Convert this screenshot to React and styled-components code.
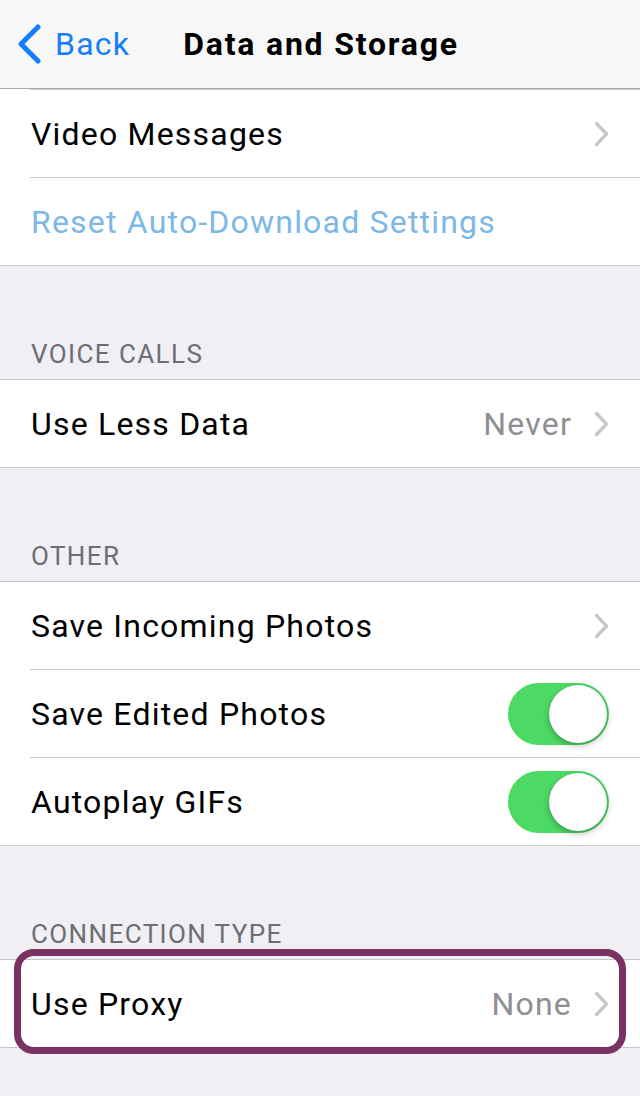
import React from 'react';
import styled, { createGlobalStyle } from 'styled-components';

const GlobalStyle = createGlobalStyle`
  html, body {
    margin: 0;
    padding: 0;
    background: #efeff4;
  }
  body {
    font-family: Roboto, 'Liberation Sans', Arial, sans-serif;
    -webkit-font-smoothing: antialiased;
  }
`;

const Screen = styled.div`
  width: 640px;
  height: 1096px;
  overflow: hidden;
  background: #efeff4;
  display: flex;
  flex-direction: column;
`;

const NavBar = styled.header`
  position: relative;
  flex-shrink: 0;
  height: 88px;
  background: #f7f7f7;
  border-bottom: 1px solid #a9a9ad;
  display: flex;
  align-items: center;
  justify-content: center;
`;

const BackButton = styled.button`
  position: absolute;
  left: 16px;
  top: 0;
  bottom: 0;
  display: flex;
  align-items: center;
  gap: 11px;
  padding: 0;
  border: none;
  background: transparent;
  color: #167efb;
  font-family: inherit;
  font-size: 32px;
  letter-spacing: 1.2px;
  cursor: pointer;
  svg {
    width: 28px;
    height: 40px;
  }
`;

const Title = styled.h1`
  margin: 0 0 0 2px;
  font-size: 32px;
  font-weight: 700;
  color: #000;
  letter-spacing: 1.8px;
`;

const Group = styled.section`
  background: #fff;
  border-bottom: 1px solid #c8c7cc;
  border-top: ${(p) => (p.$scrolled ? 'none' : '1px solid #c8c7cc')};
  ${(p) => p.$scrolled && `
    padding-top: 1px;
    position: relative;
    &::before {
      content: '';
      position: absolute;
      top: 0;
      left: 30px;
      right: 0;
      height: 1px;
      background: #c8c7cc;
    }
  `}
`;

const SectionHeader = styled.div`
  height: 113px;
  box-sizing: border-box;
  display: flex;
  align-items: flex-end;
  padding: 0 31px 10px;
  font-size: 26px;
  line-height: 30px;
  color: #6d6d72;
  text-transform: uppercase;
  letter-spacing: 1.4px;
`;

const Row = styled.div`
  position: relative;
  height: 87px;
  margin-left: 30px;
  padding-right: 31px;
  display: flex;
  align-items: center;
  gap: 22px;
  border-bottom: ${(p) => (p.$last ? 'none' : '1px solid #c8c7cc')};
`;

const Label = styled.span`
  flex: 1;
  font-size: 32px;
  letter-spacing: 1.2px;
  color: ${(p) => (p.$link ? '#7cb8e8' : '#000')};
  padding-left: 1px;
  white-space: nowrap;
`;

const Value = styled.span`
  font-size: 32px;
  letter-spacing: 1.2px;
  color: #8e8e93;
`;

const Chevron = styled.svg`
  width: 15px;
  height: 26px;
  flex-shrink: 0;
`;

const Toggle = styled.span`
  position: relative;
  width: 101px;
  height: 62px;
  border-radius: 31px;
  background: ${(p) => (p.$on ? '#4cd964' : '#e5e5ea')};
  flex-shrink: 0;
  &::after {
    content: '';
    position: absolute;
    top: 2px;
    right: ${(p) => (p.$on ? '2px' : 'auto')};
    left: ${(p) => (p.$on ? 'auto' : '2px')};
    width: 58px;
    height: 58px;
    border-radius: 50%;
    background: #fff;
    box-shadow: 0 3px 6px rgba(0, 0, 0, 0.25), 0 0 1px rgba(0, 0, 0, 0.3);
  }
`;

const Highlight = styled.div`
  position: absolute;
  left: -16px;
  right: 14px;
  top: -11px;
  bottom: -7px;
  border: 7px solid #7b3262;
  border-radius: 20px;
  pointer-events: none;
`;

const ArrowRight = () => (
  <Chevron viewBox="0 0 15 26">
    <path d="M2.5 2.5 L12.5 13 L2.5 23.5" fill="none" stroke="#c7c7cc" strokeWidth="3.4" strokeLinecap="round" strokeLinejoin="round" />
  </Chevron>
);

const Cell = ({ label, value, chevron, toggle, link, last, highlight }) => (
  <Row $last={last}>
    <Label $link={link}>{label}</Label>
    {value && <Value>{value}</Value>}
    {chevron && <ArrowRight />}
    {toggle !== undefined && <Toggle $on={toggle} />}
    {highlight && <Highlight />}
  </Row>
);

export default function App() {
  return (
    <>
      <GlobalStyle />
      <Screen>
        <NavBar>
          <BackButton>
            <svg viewBox="0 0 28 40">
              <path d="M22 3 L5 20 L22 37" fill="none" stroke="#167efb" strokeWidth="5" strokeLinecap="round" strokeLinejoin="round" />
            </svg>
            Back
          </BackButton>
          <Title>Data and Storage</Title>
        </NavBar>

        <Group $scrolled>
          <Cell label="Video Messages" chevron />
          <Cell label="Reset Auto-Download Settings" link last />
        </Group>

        <SectionHeader>Voice Calls</SectionHeader>
        <Group>
          <Cell label="Use Less Data" value="Never" chevron last />
        </Group>

        <SectionHeader>Other</SectionHeader>
        <Group>
          <Cell label="Save Incoming Photos" chevron />
          <Cell label="Save Edited Photos" toggle={true} />
          <Cell label="Autoplay GIFs" toggle={true} last />
        </Group>

        <SectionHeader>Connection Type</SectionHeader>
        <Group>
          <Cell label="Use Proxy" value="None" chevron last highlight />
        </Group>
      </Screen>
    </>
  );
}
